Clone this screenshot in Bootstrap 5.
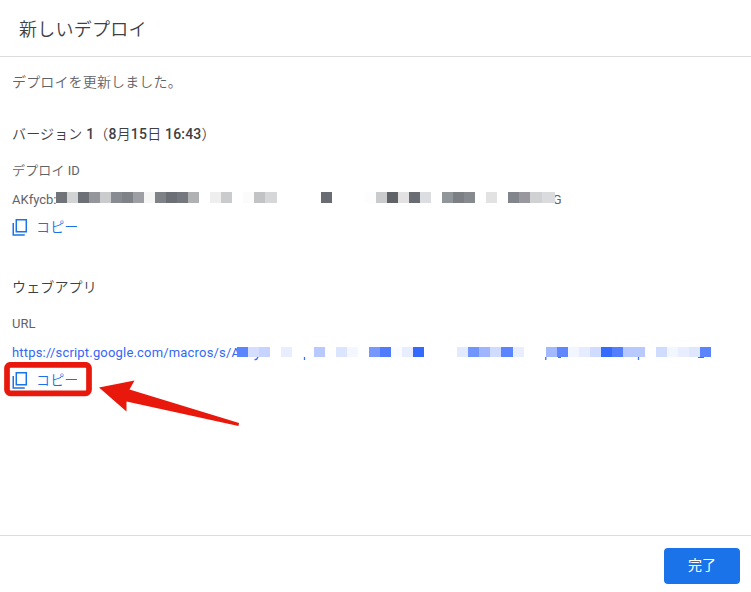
<!DOCTYPE html>
<html lang="ja">
<head>
    <meta charset="UTF-8">
    <meta name="viewport" content="width=device-width, initial-scale=1.0">
    <title>新しいデプロイ</title>
    <link href="https://cdn.jsdelivr.net/npm/bootstrap@5.3.0/dist/css/bootstrap.min.css" rel="stylesheet">
    <style>
        body {
            font-family: Roboto, "Noto Sans CJK JP", sans-serif;
            font-size: 14px;
            line-height: 20px;
            color: #5f6368;
        }
        .dialog-head {
            height: 57px;
            padding: 3px 19px 0;
            border-bottom: 1px solid #dadce0;
        }
        .dialog-head h1 {
            font-size: 18px;
            font-weight: 350;
            letter-spacing: .25px;
            color: #3c4043;
        }
        .dialog-main {
            padding: 15px 12px 0;
        }
        .jp {
            font-weight: 350;
            letter-spacing: .15px;
        }
        .section-title {
            font-size: 14px;
            line-height: 20px;
            color: #3c4043;
        }
        .version-title {
            margin: 32px 0 0;
            letter-spacing: .2px;
        }
        .webapp-title {
            margin: 40px 0 0;
        }
        .field-label,
        .field-value {
            font-size: 13px;
            line-height: 20px;
        }
        .field-label {
            margin-top: 17px;
        }
        .field-value {
            margin-top: 9px;
            white-space: nowrap;
        }
        .field-value a {
            color: #3367f6;
            letter-spacing: .18px;
        }
        .mosaic {
            position: absolute;
            left: 0;
            top: 0;
        }
        .tail {
            margin-left: 493px;
        }
        .copy-btn {
            margin-top: 7px;
            height: 20px;
            color: #1a73e8;
            gap: 7px;
        }
        .highlight {
            position: absolute;
            left: -8px;
            top: -8px;
        }
        .dialog-foot {
            height: 57px;
            padding: 3px 11px 0 0;
            border-top: 1px solid #dadce0;
        }
        .btn-done {
            width: 76px;
            height: 36px;
            padding: 0 0 1px;
            border: 0;
            border-radius: 4px;
            background: #1a73e8;
            color: #fff;
            font-size: 14px;
            font-weight: 400;
        }
    </style>
</head>
<body>
    <div class="d-flex flex-column vh-100 overflow-hidden">
        <header class="dialog-head d-flex align-items-center flex-shrink-0">
            <h1 class="m-0">新しいデプロイ</h1>
        </header>

        <main class="dialog-main flex-grow-1">
            <p class="jp m-0">デプロイを更新しました。</p>

            <h2 class="section-title version-title"><span class="jp">バージョン</span> 1<span class="jp">（</span>8<span class="jp">月</span>15<span class="jp">日</span> 16:43<span class="jp">）</span></h2>
            <div class="field-label"><span class="jp">デプロイ</span> ID</div>
            <div class="field-value position-relative">
                <span>AKfycb:</span>
                <svg class="mosaic" id="idMosaic" width="727" height="20"></svg>
                <span class="tail">G</span>
            </div>
            <div class="copy-btn d-flex align-items-center">
                <svg width="17" height="18" viewBox="0 0 17 18" fill="none" stroke="currentColor" stroke-width="1.5">
                    <rect x="4.300" y="1.750" width="10" height="12"/>
                    <path d="M1.250 5v12h11.500"/>
                </svg>
                <span class="jp">コピー</span>
            </div>

            <h2 class="section-title webapp-title"><span class="jp">ウェブアプリ</span></h2>
            <div class="field-label">URL</div>
            <div class="field-value position-relative">
                <a class="text-decoration-none" href="#">https://script.google.com/macros/s/A</a>
                <svg class="mosaic" id="urlMosaic" width="727" height="20"></svg>
            </div>
            <div class="copy-btn d-flex align-items-center position-relative">
                <svg width="17" height="18" viewBox="0 0 17 18" fill="none" stroke="currentColor" stroke-width="1.5">
                    <rect x="4.300" y="1.750" width="10" height="12"/>
                    <path d="M1.250 5v12h11.500"/>
                </svg>
                <span class="jp">コピー</span>
                <svg class="highlight" width="246" height="68">
                    <rect x="3" y="2.800" width="82" height="28.500" rx="3.500" fill="none" stroke="#e8190c" stroke-width="5.700"/>
                    <path d="M95 25.500L130.500 18.500 125.500 27.500 235 61 234.500 64 122.500 39.500V49.500Z" fill="#e8190c"/>
                </svg>
            </div>
        </main>

        <footer class="dialog-foot d-flex justify-content-end align-items-center flex-shrink-0">
            <button type="button" class="btn btn-primary btn-done">完了</button>
        </footer>
    </div>

    <script src="https://cdn.jsdelivr.net/npm/bootstrap@5.3.0/dist/js/bootstrap.bundle.min.js"></script>
    <script>
        // [x, width, color]
        const idBlocks = [
            [44, 11, '#707378'], [55, 11, '#d2d3d5'], [66, 11, '#6d7076'], [77, 11, '#95969b'],
            [88, 11, '#cacbcd'], [99, 11, '#888b92'], [110, 11, '#7f8287'], [121, 11, '#9e9fa4'],
            [132, 11, '#f6f6f6'], [143, 11, '#7f8387'], [154, 11, '#6c6f75'], [165, 11, '#74777d'],
            [176, 11, '#b0b1b3'], [198, 11, '#eeeeee'], [209, 11, '#cacbcd'], [231, 11, '#fbfbfb'],
            [242, 11, '#c2c3c5'], [253, 12, '#d6d7d9'], [309, 11, '#696c72'], [353, 11, '#fdfdfd'],
            [364, 11, '#cacbcd'], [375, 11, '#5f6267'], [386, 11, '#e2e2e2'], [397, 11, '#696c72'],
            [408, 11, '#dcdde0'], [430, 11, '#91969a'], [441, 11, '#7c7f84'], [452, 11, '#868a8f'],
            [474, 11, '#e2e2e2'], [496, 11, '#82858b'], [507, 11, '#98989e'], [518, 12, '#d0d1d3'],
            [530, 13, '#dadbdd']
        ];
        const urlBlocks = [
            [225, 11, '#5b84ff'], [236, 11, '#d6deff'], [247, 11, '#c6d2ff'], [269, 11, '#e8edff'],
            [302, 11, '#b8c9ff'], [324, 11, '#dce5ff'], [335, 11, '#f4f7ff'], [357, 11, '#7798ff'],
            [368, 11, '#4f7cff'], [379, 11, '#fbfcff'], [390, 11, '#e8eeff'], [401, 11, '#356aff'],
            [445, 11, '#e2eaff'], [456, 11, '#7095ff'], [467, 11, '#9fb5ff'], [478, 11, '#d0dcff'],
            [489, 12, '#5b84ff'], [501, 11, '#e8edff'], [534, 11, '#a3b9ff'], [545, 11, '#5f87ff'],
            [556, 11, '#f2f6ff'], [567, 11, '#e6ecff'], [578, 11, '#d0dcff'], [589, 11, '#356aff'],
            [600, 11, '#527eff'], [611, 22, '#b8c9ff'], [644, 11, '#d0dcff'], [655, 11, '#f2f6ff'],
            [666, 11, '#e8edff'], [677, 11, '#dfe7ff'], [688, 11, '#5b84ff']
        ];

        function drawMosaic(id, blocks, y, h, extra) {
            const svg = document.getElementById(id);
            const rects = blocks.map(([x, w, color]) =>
                `<rect x="${x}" y="${y}" width="${w}" height="${h}" fill="${color}"/>`);
            svg.innerHTML = rects.join('') + (extra || '');
        }

        drawMosaic('idMosaic', idBlocks, 2, 11);
        // descenders that stick out below the blocks
        drawMosaic('urlMosaic', urlBlocks, 4, 10, `
            <path d="M246 14q-1 3-3.500 2.500M292.500 14v3M533.800 14v3M626.500 14v3" fill="none" stroke="#3b6ef8" stroke-width="1.300"/>
            <rect x="546" y="14" width="3" height="1" fill="#3b6ef8"/>
            <rect x="686" y="14" width="6" height="1" fill="#3b6ef8"/>
        `);
    </script>
</body>
</html>
